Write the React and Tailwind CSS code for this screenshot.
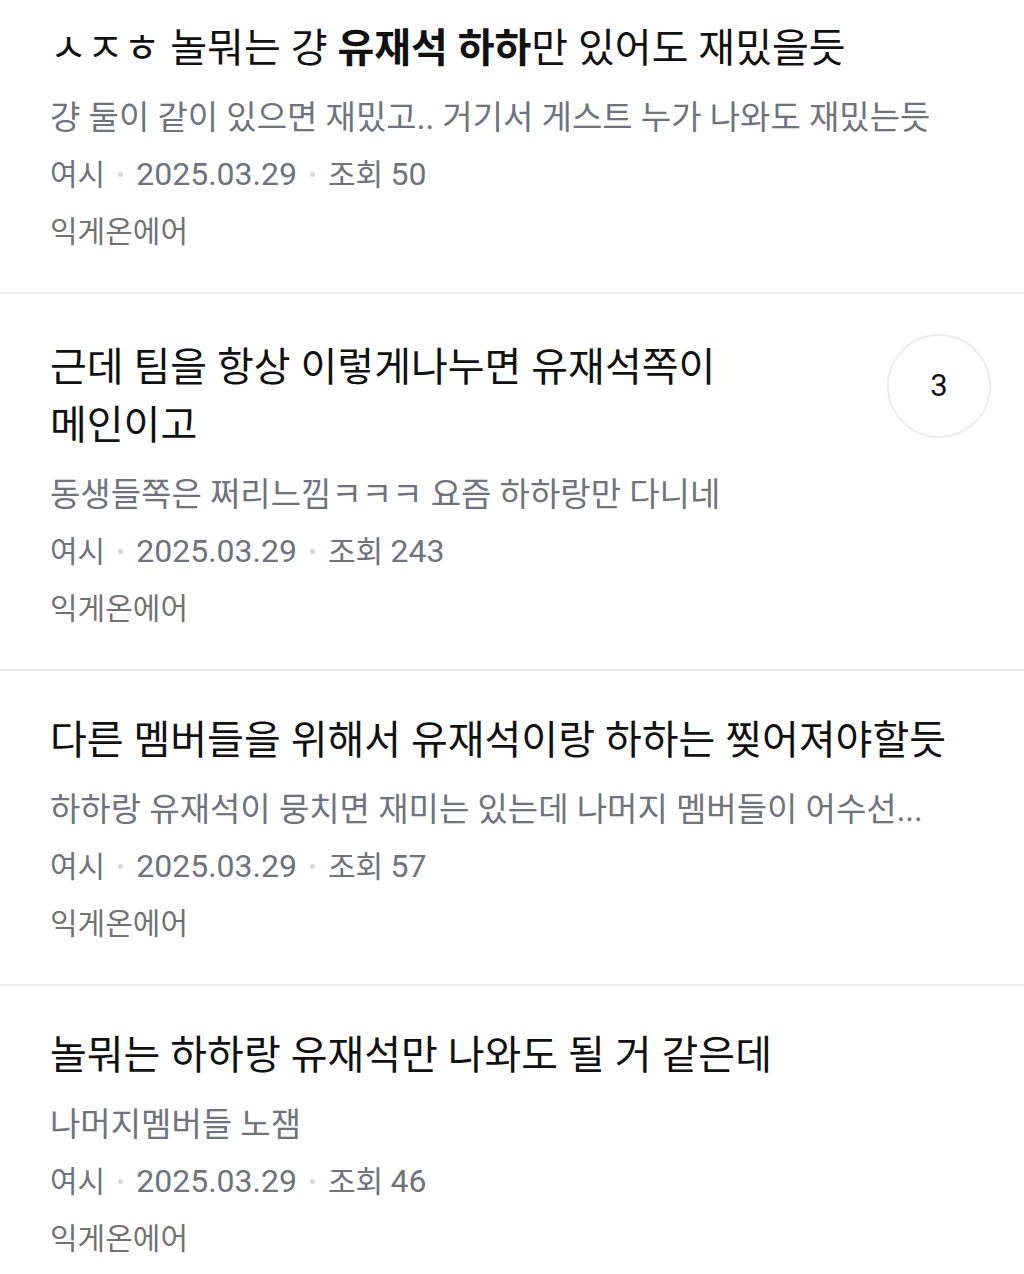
const posts = [
  {
    title: (
      <>
        ㅅㅈㅎ 놀뭐는 걍 <b className="font-bold">유재석 하하</b>만 있어도 재밌을듯
      </>
    ),
    preview: '걍 둘이 같이 있으면 재밌고.. 거기서 게스트 누가 나와도 재밌는듯',
    views: 50,
  },
  {
    title: '근데 팀을 항상 이렇게나누면 유재석쪽이 메인이고',
    preview: '동생들쪽은 쩌리느낌ㅋㅋㅋ 요즘 하하랑만 다니네',
    views: 243,
    comments: 3,
  },
  {
    title: '다른 멤버들을 위해서 유재석이랑 하하는 찢어져야할듯',
    preview: '하하랑 유재석이 뭉치면 재미는 있는데 나머지 멤버들이 어수선...',
    views: 57,
  },
  {
    title: '놀뭐는 하하랑 유재석만 나와도 될 거 같은데',
    preview: '나머지멤버들 노잼',
    views: 46,
  },
];

function Dot() {
  return <span className="inline-block w-[5px] h-[5px] rounded-full bg-[#d5d7db] mx-[13px] align-middle" />;
}

function PostItem({ post, first }) {
  const pad = first ? 'pt-[20px]' : post.comments != null ? 'pt-[45px]' : 'pt-[41px]';
  return (
    <div className={`flex items-start pl-[50px] pr-[33px] pb-[32px] border-b-2 border-[#ededed] ${pad}`}>
      <div className="flex-1 min-w-0">
        <div className="text-[40px] leading-[58px] text-[#111] break-keep">{post.title}</div>
        <div className="mt-[11px] text-[33px] leading-[57px] text-[#6f737b] whitespace-nowrap overflow-hidden">
          {post.preview}
        </div>
        <div className="text-[30px] leading-[57px] text-[#6f737b] flex items-center">
          <span>여시</span>
          <Dot />
          <span className="text-[32px]">2025.03.29</span>
          <Dot />
          <span>
            조회 <span className="text-[32px]">{post.views}</span>
          </span>
        </div>
        <div className="text-[30px] leading-[57px] text-[#727272]">익게온에어</div>
      </div>
      {post.comments != null && (
        <div className="-mt-[5px] ml-[36px] shrink-0 w-[104px] h-[104px] rounded-full border-2 border-[#ececec] flex items-center justify-center text-[31px] text-[#111]">
          {post.comments}
        </div>
      )}
    </div>
  );
}

export default function App() {
  return (
    <div
      className="w-[1024px] h-[1274px] bg-white overflow-hidden"
      style={{ fontFamily: 'Roboto, "Noto Sans CJK KR", sans-serif' }}
    >
      {posts.map((post, i) => (
        <PostItem key={i} post={post} first={i === 0} />
      ))}
    </div>
  );
}
